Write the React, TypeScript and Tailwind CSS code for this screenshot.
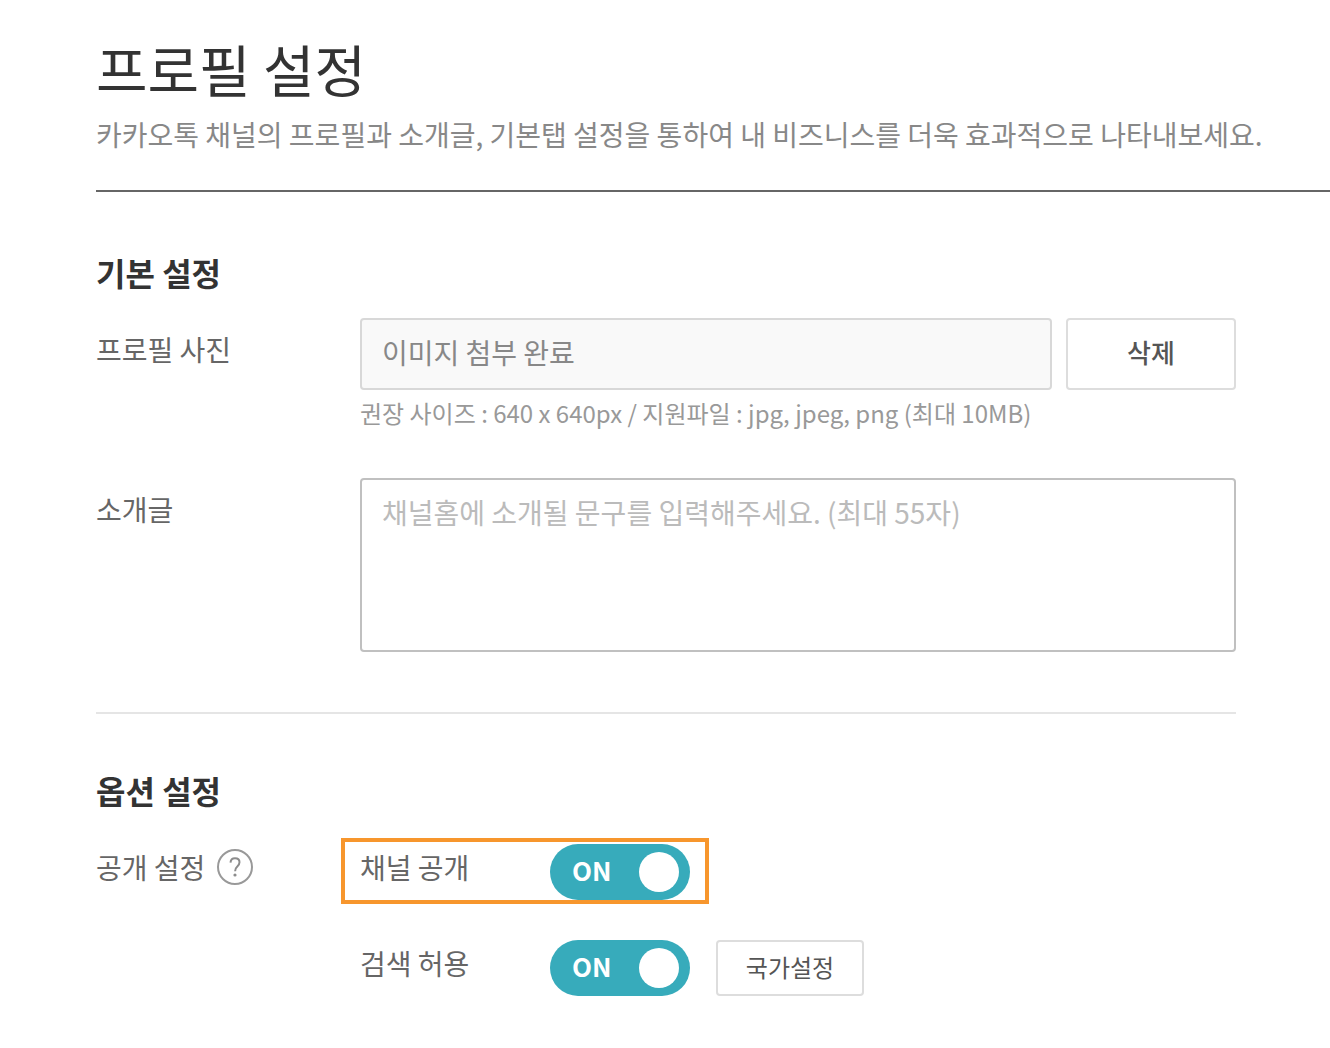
import { useState } from "react";

interface ToggleProps {
  id: string;
}

function Toggle({ id }: ToggleProps) {
  const [on, setOn] = useState(true);

  return (
    <span className="relative flex h-14 w-[140px] shrink-0 items-center">
      <input
        id={id}
        type="checkbox"
        role="switch"
        checked={on}
        onChange={(e) => setOn(e.target.checked)}
        className="absolute inset-0 h-full w-full cursor-pointer appearance-none rounded-full bg-[#b5b5b5] checked:bg-[#37abbb]"
      />
      <span
        aria-hidden="true"
        className="pointer-events-none relative flex w-full items-start justify-between pr-[11px] pl-[22px] text-[26px] leading-9 font-bold text-white"
      >
        {on ? "ON" : "OFF"}
        <span className="h-10 w-10 rounded-full bg-white" />
      </span>
    </span>
  );
}

export default function App() {
  const [intro, setIntro] = useState("");

  return (
    <main className="min-h-screen overflow-hidden bg-white pt-8 pb-[52px] pl-24 font-['Noto_Sans_CJK_KR',sans-serif] text-[28px] leading-10 text-[#666]">
      <header className="border-b-2 border-[#666] pb-[34px]">
        <h1 className="text-[56px] leading-[72px] text-[#333]">프로필 설정</h1>
        <p className="mt-2 leading-11 text-[#888]">
          카카오톡 채널의 프로필과 소개글, 기본탭 설정을 통하여 내 비즈니스를 더욱 효과적으로 나타내보세요.
        </p>
      </header>

      <form className="mr-[94px]" onSubmit={(e) => e.preventDefault()}>
        {/* Basic settings */}
        <section className="border-b-2 border-[#e5e5e5] pt-[58px] pb-15">
          <h2 className="text-[32px] leading-11 font-bold text-[#333]">기본 설정</h2>

          <div className="mt-6 flex">
            <label htmlFor="photo" className="w-[264px] shrink-0 pt-[11px]">
              프로필 사진
            </label>
            <div className="min-w-0 flex-1">
              <div className="flex gap-3.5">
                <input
                  id="photo"
                  type="text"
                  readOnly
                  value="이미지 첨부 완료"
                  className="h-18 min-w-0 flex-1 rounded-sm border-2 border-[#d8d8d8] bg-[#f9f9f9] px-5 pb-1 text-[#888]"
                />
                <button
                  type="button"
                  className="h-18 w-[170px] shrink-0 rounded-sm border-2 border-[#ddd] pb-1 text-[26px] font-medium text-[#555]"
                >
                  삭제
                </button>
              </div>
              <p className="mt-1 text-2xl leading-[38px] text-[#999]">
                권장 사이즈 : 640 x 640px / 지원파일 : jpg, jpeg, png (최대 10MB)
              </p>
            </div>
          </div>

          <div className="mt-[46px] flex">
            <label htmlFor="intro" className="w-[264px] shrink-0 pt-[11px]">
              소개글
            </label>
            <textarea
              id="intro"
              maxLength={55}
              value={intro}
              onChange={(e) => setIntro(e.target.value)}
              placeholder="채널홈에 소개될 문구를 입력해주세요. (최대 55자)"
              className="h-[174px] min-w-0 flex-1 resize-none rounded-sm border-2 border-[#c0c0c0] px-5 py-3 placeholder:text-[#bbb]"
            />
          </div>
        </section>

        {/* Option settings */}
        <section className="pt-[54px]">
          <h2 className="text-[32px] leading-11 font-bold text-[#333]">옵션 설정</h2>

          <div className="mt-[26px] flex">
            <div className="flex w-[245px] shrink-0 items-center gap-3 self-start pt-[9px]">
              <span>공개 설정</span>
              <button
                type="button"
                aria-label="공개 설정 도움말"
                className="flex h-9 w-9 items-center justify-center rounded-full border-2 border-[#999] text-[#8c8c8c]"
              >
                <svg viewBox="0 0 32 32" className="h-8 w-8" fill="none" stroke="currentColor">
                  <path
                    d="M11.5 11.6C11.7 8.8 13.4 7.2 16 7.2c2.700 0 4.500 1.600 4.500 4.100 0 1.900-.9 2.900-2.200 4.200-1.500 1.400-2.200 2.500-2.200 4.700"
                    strokeWidth="2"
                  />
                  <circle cx="16" cy="24" r="1.600" fill="currentColor" stroke="none" />
                </svg>
              </button>
            </div>
            <div>
              <div className="flex w-[368px] items-start border-4 border-[#f7962d] pt-0.5 pl-[15px]">
                <label htmlFor="open" className="w-[190px] pt-[3px]">
                  채널 공개
                </label>
                <Toggle id="open" />
              </div>
              <div className="mt-9 flex items-start pl-[19px]">
                <label htmlFor="search" className="w-[190px] pt-[3px]">
                  검색 허용
                </label>
                <Toggle id="search" />
                <button
                  type="button"
                  className="ml-[26px] h-14 w-[148px] rounded-sm border-2 border-[#ddd] pb-0.5 text-2xl text-[#555]"
                >
                  국가설정
                </button>
              </div>
            </div>
          </div>
        </section>
      </form>
    </main>
  );
}
